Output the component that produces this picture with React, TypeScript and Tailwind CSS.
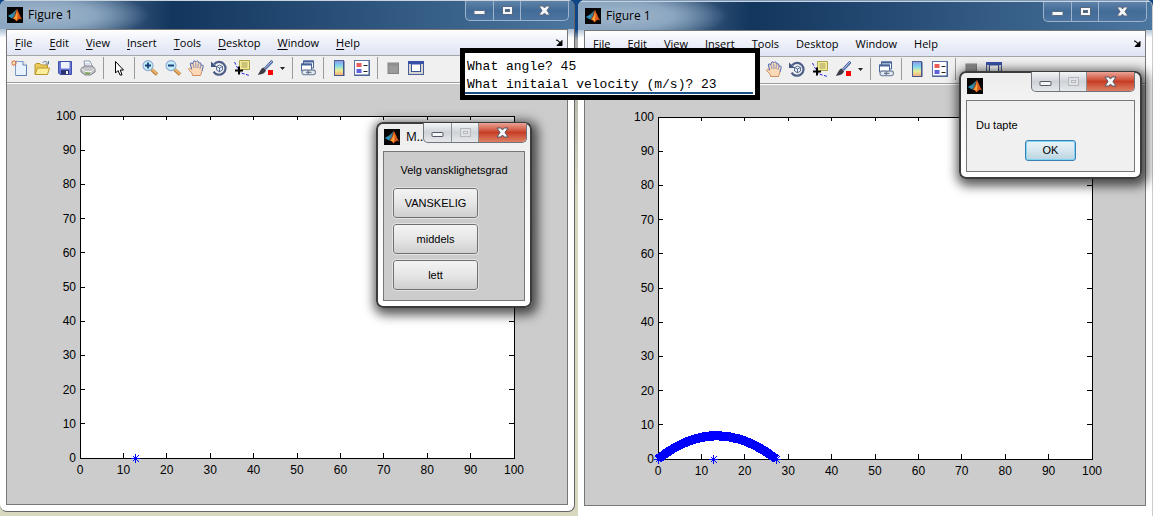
import type { ReactNode } from "react";

const TICKS = [0, 10, 20, 30, 40, 50, 60, 70, 80, 90, 100];
const MENUS = ["File", "Edit", "View", "Insert", "Tools", "Desktop", "Window", "Help"];

function Logo() {
  return (
    <svg viewBox="0 0 16 16" className="h-4 w-4 shrink-0" aria-hidden="true">
      <rect width="16" height="16" fill="#050505" />
      <path d="M0.8 9 L5 6.6 L7.5 8.5 L5 11.5 L3.4 10.6Z" fill="#2f8fb6" />
      <path d="M5 6.6 L8.2 3.8 L9.6 2 L8 7.8 L6.6 10 L5 11.5 L6.2 8.4Z" fill="#3c7f94" />
      <path d="M9.8 1.8 C11.2 3.5 12.3 8 15.2 12.6 C13.4 11.2 12.3 11.6 11.2 13 L9 14.4 C8.6 12.6 7.6 11.6 5.4 11.7 C7.8 10 8.7 6.4 9.8 1.8Z" fill="#d8571a" />
      <path d="M9.9 4 C10.8 7 10.6 11 9.4 13.8 C8.8 12.4 7.8 11.7 6.4 11.6 C8.6 9.6 9.4 7 9.9 4Z" fill="#f6a53b" />
    </svg>
  );
}

function Controls({ variant }: { variant: "main" | "dialog" }) {
  const main = variant === "main";
  const frame = main
    ? "border-[#9db3cb] bg-linear-to-b from-[#5f83a9] via-[#426b97] to-[#4c74a0]"
    : "border-[#70757c] bg-linear-to-b from-[#f4f5f6] via-[#cfd3d8] to-[#e6e8eb]";
  const line = main ? "border-[#9db3cb]" : "border-[#8b9097]";
  const stroke = main ? "#5a6a80" : "#535666";
  const off = main ? "#5a6a80" : "#b4b7bb";
  const close = main ? "" : "bg-linear-to-b from-[#eba397] via-[#c63d24] to-[#dd7f63]";
  return (
    <div className={`flex h-5 shrink-0 overflow-hidden rounded-b-[5px] border border-t-0 ${frame}`}>
      <button aria-label="Minimize" className={`flex w-7 items-center justify-center border-r ${line}`}>
        <svg viewBox="0 0 13 11" className="h-[11px] w-[13px]">
          <rect x="1" y="5.5" width="11" height="4" rx="0.5" fill="#f6f7f8" stroke={stroke} />
        </svg>
      </button>
      <button aria-label="Maximize" className={`flex w-[27px] items-center justify-center border-r ${line}`}>
        <svg viewBox="0 0 13 11" className="h-[11px] w-[13px]">
          <rect x="1.5" y="1.5" width="10" height="8" fill={main ? "#f6f7f8" : "#dfe1e4"} stroke={off} />
          <rect x="4.5" y="4.5" width="4" height="2" fill={main ? "#42658c" : "#e9ebed"} stroke={off} />
        </svg>
      </button>
      <button aria-label="Close" className={`flex w-[47px] items-center justify-center ${close}`}>
        <svg viewBox="0 0 13 11" className="h-[11px] w-[13px]">
          <path d="M1 1H5L6.5 3L8 1H12L9 5.5L12 10H8L6.5 8L5 10H1L4 5.5Z" fill="#f8f8f8" stroke={stroke} />
        </svg>
      </button>
    </div>
  );
}

function Tool({ label, children }: { label: string; children: ReactNode }) {
  return (
    <button aria-label={label} className="flex w-[23px] shrink-0 items-center justify-center">
      <svg viewBox="0 0 16 16" className="h-4 w-4" fill="none">
        {children}
      </svg>
    </button>
  );
}

function Separator() {
  return (
    <span className="flex w-2 shrink-0 justify-center">
      <span className="my-px w-px bg-[#9a9a9a]" />
    </span>
  );
}

function Lens({ plus }: { plus?: boolean }) {
  return (
    <>
      <path d="M9.5 9.5L15 14.5" stroke="#b37a35" strokeWidth="3.4" />
      <path d="M9.5 9L15 14" stroke="#f0b56a" strokeWidth="1.8" />
      <circle cx="6" cy="5.6" r="5" fill="#c4eefa" stroke="#8fa9d0" strokeWidth="1.1" />
      <path d="M3 5.5H9" stroke="#18407c" strokeWidth="1.8" />
      {plus && <path d="M6 2.5V8.5" stroke="#18407c" strokeWidth="1.8" />}
    </>
  );
}

function Toolbar() {
  return (
    <div className="flex h-[27px] overflow-hidden border-b border-[#9c9c9c] bg-[#f0f0f0] pb-[2px]">
      <Tool label="New figure">
        <path d="M4.5 1.5H12L15.5 5V15.5H4.5Z" fill="#e9f1fc" stroke="#7f9bc6" />
        <path d="M12 1.5V5H15.5" fill="#fff" stroke="#5e7fb2" />
        <path d="M15.5 5V15.5H5" stroke="#5e7fb2" />
        <path d="M3 0V6M0 3H6M0.8 0.8L5.2 5.2M5.2 0.8L0.8 5.2" stroke="#e0683c" />
        <rect x="2" y="2" width="2" height="2" fill="#fbe6a0" />
      </Tool>
      <Tool label="Open file">
        <path d="M1 14V4.5L2 3.5H6L7.5 5H13.5V14Z" fill="#ecc957" stroke="#b8962f" />
        <path d="M1 14.5L3.5 8H15.5L13.5 14.5Z" fill="#fdee9a" stroke="#b8962f" />
        <path d="M8.5 3C10 1 12.5 1 13.5 3M14.5 1V4H11.5" stroke="#5c7596" />
      </Tool>
      <Tool label="Save figure">
        <path d="M1.5 1.5H14.5V14.5H3L1.5 13Z" fill="#6676d6" stroke="#4250ab" />
        <rect x="4" y="2" width="8.5" height="6.5" fill="#eef2fb" />
        <path d="M12.5 2V8" stroke="#a9b4e6" />
        <rect x="4" y="10" width="8" height="4.5" fill="#2b3470" />
        <rect x="9" y="11" width="2" height="3" fill="#f0f0f0" />
      </Tool>
      <Tool label="Print figure">
        <path d="M5 7L4 1H10L12.5 6.5" fill="#fafcff" stroke="#8c99b2" />
        <path d="M1 8.5L5 6H12L15 8.5V12L10.5 15H5L1 12Z" fill="#c3c5c9" stroke="#7a7d83" />
        <path d="M1.5 9L5.5 11.5H11L14.5 9" stroke="#f0f0f0" />
        <path d="M5 13L10 13.5" stroke="#77a845" strokeWidth="1.4" />
        <path d="M5 4H10" stroke="#b5bfd2" />
      </Tool>
      <Separator />
      <Tool label="Edit plot">
        <path d="M4.5 1.5V13L7 10.5L9 15H11L9.3 10H12.5Z" fill="#fff" stroke="#000" />
      </Tool>
      <Separator />
      <Tool label="Zoom in"><Lens plus /></Tool>
      <Tool label="Zoom out"><Lens /></Tool>
      <Tool label="Pan">
        <path d="M4.5 15.5L4 13L0.5 9.5C0.5 8 2 7.8 3.7 9.4L2.3 4C2.4 2.5 4 2.6 4.6 4L5.4 2C5.6 0.4 7.4 0.4 7.6 2L8.3 1.6C9 0.2 10.6 0.8 10.4 2.6L10.8 3.4C11.8 2 13 2.6 12.8 4L13 5.6C14 4.5 15.6 5 15.2 6.6L14 11L12.5 15.5Z" fill="#fbd9b6" />
        <path d="M3.7 9.4L2.3 4C2.4 2.5 4 2.6 4.6 4L5.4 2C5.6 0.4 7.4 0.4 7.6 2L8.3 1.6C9 0.2 10.6 0.8 10.4 2.6L10.8 3.4C11.8 2 13 2.6 12.8 4L13 5.6C14 4.5 15.6 5 15.2 6.6L14 11" stroke="#4a66b4" />
        <path d="M14 11L12.5 15.5H4.5L4 13L0.5 9.5C0.5 8 2 7.8 3.7 9.4" stroke="#cf8f68" />
        <path d="M5 4L6 8M7.7 3L8 8M10.3 4L10 8M12.6 6L12 9" stroke="#6d7fb8" strokeWidth="0.8" />
      </Tool>
      <Tool label="Rotate 3D">
        <path d="M3.2 4.2A6.4 6.4 0 1 1 2.6 11.6" stroke="#4d5f88" strokeWidth="2.2" />
        <path d="M0 1.5V7H6Z" fill="#415681" />
        <path d="M5.5 6.5L8.5 5L11.5 6.5V10L8.5 11.8L5.5 10ZM5.5 6.5L8.5 8L11.5 6.5M8.5 8V11.8" fill="#e6eef9" stroke="#4c6189" strokeWidth="0.9" />
      </Tool>
      <Tool label="Data cursor">
        <path d="M0.5 2L3 7L7 13L15.5 15.5" stroke="#2a2adf" strokeDasharray="3 1.5" />
        <path d="M5.5 0.5H15.5V9.5H9L5.5 12Z" fill="#f3eb9a" stroke="#aaa14b" />
        <path d="M7.5 3H13.5M7.5 5H13.5M7.5 7H13.5" stroke="#a39b55" />
        <path d="M5 6.5V14.5M1 10.5H9" stroke="#000" strokeWidth="2" />
      </Tool>
      <Tool label="Brush">
        <path d="M15.5 0.8L8 8.8" stroke="#546ca5" strokeWidth="3" />
        <path d="M15 1L8.5 8" stroke="#b7c7e8" />
        <path d="M6.5 7.5L9 10C8.5 13.5 4 15 0.5 14.6C3 13 2.8 8.8 6.5 7.5Z" fill="#3b3e47" />
        <rect x="11" y="10" width="5" height="5" fill="#f00" />
      </Tool>
      <button aria-label="Brush options" className="flex w-3 shrink-0 items-center justify-center">
        <svg viewBox="0 0 5 3" className="h-[3px] w-[5px]"><path d="M0 0H5L2.5 3Z" fill="#222" /></svg>
      </button>
      <Separator />
      <Tool label="Link plot">
        <path d="M3.5 1H13.5V8H3.5Z" fill="#f7faff" stroke="#49639b" />
        <path d="M3 1.5H14" stroke="#49639b" strokeWidth="2" />
        <path d="M1.5 4H11.5V11H1.5Z" fill="#fff" stroke="#49639b" />
        <path d="M1 4.5H12" stroke="#49639b" strokeWidth="2" />
        <rect x="2" y="10" width="7.5" height="4.6" rx="2.2" fill="#e4eaf2" stroke="#7c8ca3" strokeWidth="1.3" />
        <rect x="8" y="10" width="7.5" height="4.6" rx="2.2" fill="#e4eaf2" stroke="#7c8ca3" strokeWidth="1.3" />
        <path d="M6 12.3H11.5" stroke="#54667f" />
      </Tool>
      <Separator />
      <Tool label="Insert colorbar">
        <defs>
          <linearGradient id="bar" x1="0" y1="0" x2="0" y2="1">
            <stop offset="0" stopColor="#8e96e8" />
            <stop offset="0.35" stopColor="#7fd8ee" />
            <stop offset="0.65" stopColor="#e8ef98" />
            <stop offset="1" stopColor="#f6a87a" />
          </linearGradient>
        </defs>
        <rect x="3.5" y="0.5" width="9" height="15" fill="url(#bar)" stroke="#4b6394" />
        <path d="M13 1V16H4" stroke="#3a4f7c" />
      </Tool>
      <Tool label="Insert legend">
        <rect x="0.5" y="0.5" width="15" height="15" fill="#fff" stroke="#5a72a3" />
        <path d="M15 1V15H1" stroke="#3f5789" />
        <rect x="2.5" y="3" width="5" height="4" fill="#ea5b5b" />
        <rect x="2.5" y="9" width="5" height="4" fill="#5b62dc" />
        <path d="M9.5 5.5H13.5M9.5 11.5H13.5" stroke="#222" />
      </Tool>
      <Separator />
      <Tool label="Hide plot tools">
        <rect x="3" y="3" width="10.5" height="10.5" fill="#9b9b9b" stroke="#838383" />
        <path d="M3 5H13.5" stroke="#838383" />
      </Tool>
      <Tool label="Show plot tools">
        <rect x="0.5" y="1.5" width="15" height="13" fill="#d5d5cf" stroke="#4a5d9a" />
        <rect x="0" y="1" width="16" height="3" fill="#3751a8" />
        <rect x="3.5" y="4" width="9" height="7.5" fill="#fff" stroke="#3c5296" />
      </Tool>
    </div>
  );
}

function Star() {
  return (
    <path
      d="M0.5 -4V5M-4 0.5H5M-2.5 -2.5L3.5 3.5M3.5 -2.5L-2.5 3.5"
      stroke="#0000ff"
      shapeRendering="crispEdges"
    />
  );
}

function Plot({ trajectory }: { trajectory: boolean }) {
  return (
    <div className="flex min-h-0 grow border-t border-white bg-[#cccccc] pt-8 pr-[53px] pb-[46px] pl-[73px]">
      <svg className="h-full w-full overflow-visible bg-white font-['Liberation_Sans',sans-serif] text-[12px]">
        <g stroke="#000" shapeRendering="crispEdges">
          <rect width="100%" height="100%" fill="#fff" />
          {TICKS.slice(1, 10).map((t) => (
            <g key={t}>
              <line x1={`${t}%`} x2={`${t}%`} y1="0" y2="4" />
              <svg y="100%" className="overflow-visible"><line x1={`${t}%`} x2={`${t}%`} y1="-5" y2="0" /></svg>
              <line x1="0" x2="5" y1={`${t}%`} y2={`${t}%`} />
              <svg x="100%" className="overflow-visible"><line x1="-5" x2="0" y1={`${t}%`} y2={`${t}%`} /></svg>
            </g>
          ))}
        </g>
        {TICKS.map((t) => (
          <g key={t}>
            <text x={`${t}%`} y="100%" dy="16" textAnchor="middle">{t}</text>
            <text x="0" dx="-4" y={`${100 - t}%`} dy="4" textAnchor="end">{t}</text>
          </g>
        ))}
        <svg x="12.7%" y="100%" className="overflow-visible"><Star /></svg>
        {trajectory && (
          <>
            <svg viewBox="0 0 100 100" preserveAspectRatio="none" width="100%" height="100%" className="overflow-visible">
              <path
                d="M0 100Q13.6 86.4 27.2 100"
                fill="none"
                stroke="#0000ff"
                strokeWidth="9"
                vectorEffect="non-scaling-stroke"
                shapeRendering="crispEdges"
              />
            </svg>
            <svg x="0" y="100%" className="overflow-visible"><Star /></svg>
            <svg x="27.2%" y="100%" className="overflow-visible"><Star /></svg>
          </>
        )}
      </svg>
    </div>
  );
}

function FigureWindow({ mnemonics, trajectory, className }: { mnemonics: boolean; trajectory: boolean; className: string }) {
  return (
    <section
      className={`flex min-w-0 flex-1 flex-col overflow-hidden border-r bg-white bg-linear-to-b from-[#7d9ab9] from-[24px] to-white to-[38px] ${className}`}
    >
      <header className="flex h-[29px] shrink-0 items-start border-t border-[#c9d3dd] bg-linear-to-r from-[#8ea9c2] from-0% via-[#12365e] via-30% to-[#4b769f] pr-[5px] pl-[7px]">
        <div className="-ml-[7px] flex grow items-center gap-[5px] bg-[radial-gradient(110px_26px_at_40px_14px,#a3b8cc_0%,#8ba6c0_50%,transparent_100%)] pt-[6px] pb-[6px] pl-[7px]">
          <Logo />
          <h1 className="text-[12px] leading-4">Figure 1</h1>
        </div>
        <Controls variant="main" />
      </header>
      <div className="mr-[6px] ml-[6px] flex min-h-0 grow flex-col border border-[#777777]">
        <nav className="flex h-[26px] shrink-0 items-center gap-[17px] border-b border-[#a5a5a5] bg-linear-to-b from-white from-0% via-[#f3f5fb] via-30% to-[#dfe4f4] px-2 text-[11px]">
          {MENUS.map((m) => (
            <button key={m} className="leading-4">
              <span className={mnemonics ? "underline underline-offset-2" : ""}>{m[0]}</span>
              {m.slice(1)}
            </button>
          ))}
          <button aria-label="Dock figure" className="-mr-1 ml-auto">
            <svg viewBox="0 0 8 8" className="h-2 w-2"><path d="M1 1C3 1 4 2 5 4M7 1.5V6.5H2Z" fill="#000" stroke="#000" /></svg>
          </button>
        </nav>
        <div className="shrink-0"><Toolbar /></div>
        <Plot trajectory={trajectory} />
      </div>
    </section>
  );
}

function Dialog({ title, className, children }: { title: string; className: string; children: ReactNode }) {
  return (
    <div
      role="dialog"
      aria-label={title || "Message"}
      className={`absolute flex flex-col rounded-[7px] border-2 border-[#3c3c3c] bg-linear-to-b from-[#ededed] via-[#f8f8f8] to-white px-[5px] pb-[5px] shadow-[2px_3px_11px_4px_rgba(0,0,0,0.65)] ${className}`}
    >
      <div className="-mt-px flex h-7 shrink-0 items-start">
        <div className="flex grow items-center gap-[6px] pt-[6px] pl-px">
          <Logo />
          <span className="text-[12px] leading-4">{title}</span>
        </div>
        <Controls variant="dialog" />
      </div>
      {children}
    </div>
  );
}

export default function App() {
  return (
    <main className="relative flex h-screen min-h-[400px] gap-[3px] overflow-hidden bg-linear-to-b from-[#0f4786] from-[30px] via-[#aaaaaa] via-[40px] to-[#d8d8be] to-[200px] font-['Open_Sans','Noto_Sans',sans-serif] text-black">
      <FigureWindow mnemonics trajectory={false} className="mb-1 rounded-[7px] border-b border-[#666666] pb-[6px]" />
      <FigureWindow mnemonics={false} trajectory className="rounded-t-[7px] border-[#cccccc] pt-px pb-[10px]" />

      <div className="absolute top-12 left-[460px] w-[300px] border-[5px] border-black bg-white pb-px">
        <p className="pt-[5px] pl-[2px] font-['Liberation_Mono',monospace] text-[13px] leading-[18px] whitespace-pre">
          What angle? 45
          <br />
          What initaial velocity (m/s)? 23
        </p>
        <div className="-mt-[2px] mr-[2px] h-[2px] bg-[#1b4d86]" />
      </div>

      <Dialog title="M.." className="top-[122px] left-[376px] w-[156px]">
        <div className="flex flex-col items-start gap-[6px] border border-[#777777] bg-[#cccccc] px-[9px] pt-[10px] pb-[10px] font-['Liberation_Sans',sans-serif] text-[11px]">
          <p className="self-center pb-1 leading-4 whitespace-nowrap">Velg vansklighetsgrad</p>
          {["VANSKELIG", "middels", "lett"].map((b) => (
            <button
              key={b}
              className="h-[30px] w-[85px] rounded-[3px] border border-[#707070] bg-linear-to-b from-[#f3f3f3] via-[#e6e6e6] to-[#cfcfcf] outline outline-[#e2e2e2]"
            >
              {b}
            </button>
          ))}
        </div>
      </Dialog>

      <Dialog title="" className="top-[71px] left-[959px] w-[183px]">
        <div className="flex flex-col border border-[#777777] bg-[#f0f0f0] px-[9px] pt-4 pb-[10px] font-['Liberation_Sans',sans-serif] text-[11px]">
          <p className="leading-4">Du tapte</p>
          <button className="mt-[7px] h-[21px] w-[51px] self-center rounded-[3px] border border-[#3c7fb1] bg-linear-to-b from-[#eaf4f9] via-[#d6e6ee] to-[#b8d3e0] shadow-[inset_0_0_0_1px_#7fd4f3]">
            OK
          </button>
        </div>
      </Dialog>
    </main>
  );
}
